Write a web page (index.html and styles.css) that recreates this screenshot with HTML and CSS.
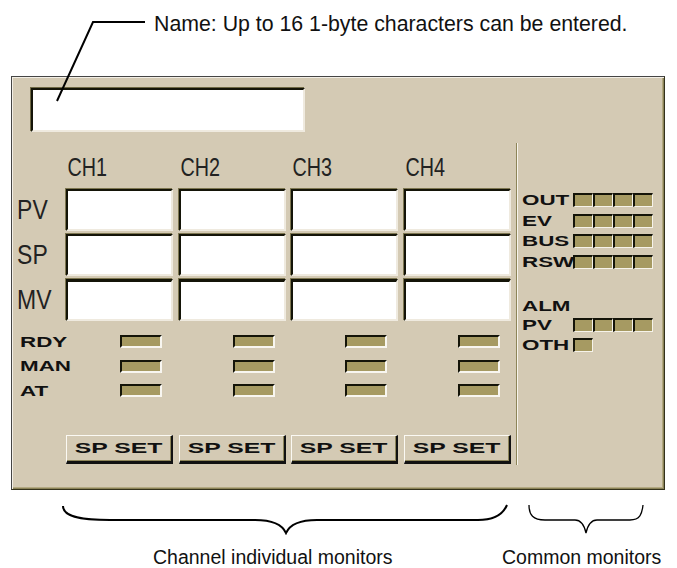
FILE: index.html
```html
<!DOCTYPE html>
<html lang="en">
<head>
    <meta charset="UTF-8" />
    <title>Loop monitor - name and monitors</title>
    <link rel="stylesheet" href="styles.css">
</head>
<body>
<div class="page">
    <p class="note"><span class="note-text">Name: Up to 16 1-byte characters can be entered.</span></p>

    <!-- leader line from the note to the name box -->
    <svg class="leader" width="677" height="110" viewBox="0 0 677 110">
        <polyline points="57,101 93,22 145,22" fill="none" stroke="#000" stroke-width="2"/>
    </svg>

    <div class="panel">
        <div class="name-box"></div>

        <div class="main">
            <div class="channels">
                <div class="cols head">
                    <span></span>
                    <span class="ch">CH1</span>
                    <span class="ch">CH2</span>
                    <span class="ch">CH3</span>
                    <span class="ch">CH4</span>
                </div>

                <div class="cols values">
                    <span class="row-label">PV</span>
                    <div class="field"></div><div class="field"></div><div class="field"></div><div class="field"></div>
                    <span class="row-label">SP</span>
                    <div class="field"></div><div class="field"></div><div class="field"></div><div class="field"></div>
                    <span class="row-label">MV</span>
                    <div class="field mv"></div><div class="field mv"></div><div class="field mv"></div><div class="field mv"></div>
                </div>

                <div class="cols lamps">
                    <span class="lamp-label"><span class="px">RDY</span></span>
                    <i class="bar"></i><i class="bar"></i><i class="bar"></i><i class="bar"></i>
                    <span class="lamp-label"><span class="px">MAN</span></span>
                    <i class="bar"></i><i class="bar"></i><i class="bar"></i><i class="bar"></i>
                    <span class="lamp-label"><span class="px">AT</span></span>
                    <i class="bar"></i><i class="bar"></i><i class="bar"></i><i class="bar"></i>
                </div>

                <div class="cols buttons">
                    <span></span>
                    <button class="sp-btn"><span class="px">SP SET</span></button>
                    <button class="sp-btn"><span class="px">SP SET</span></button>
                    <button class="sp-btn"><span class="px">SP SET</span></button>
                    <button class="sp-btn"><span class="px">SP SET</span></button>
                </div>
            </div>

            <div class="sep"></div>

            <div class="common">
                <div class="group">
                    <div class="crow"><span class="clabel"><span class="px">OUT</span></span><i class="sq"></i><i class="sq"></i><i class="sq"></i><i class="sq"></i></div>
                    <div class="crow"><span class="clabel"><span class="px">EV</span></span><i class="sq"></i><i class="sq"></i><i class="sq"></i><i class="sq"></i></div>
                    <div class="crow"><span class="clabel"><span class="px">BUS</span></span><i class="sq"></i><i class="sq"></i><i class="sq"></i><i class="sq"></i></div>
                    <div class="crow"><span class="clabel"><span class="px">RSW</span></span><i class="sq"></i><i class="sq"></i><i class="sq"></i><i class="sq"></i></div>
                </div>
                <div class="crow alm"><span class="clabel"><span class="px">ALM</span></span></div>
                <div class="crow alm-pv"><span class="clabel"><span class="px">PV</span></span><i class="sq"></i><i class="sq"></i><i class="sq"></i><i class="sq"></i></div>
                <div class="crow alm-oth"><span class="clabel"><span class="px">OTH</span></span><i class="sq"></i></div>
            </div>
        </div>
    </div>

    <svg class="braces" width="677" height="45" viewBox="0 490 677 45">
        <path d="M63,506 C63,516 78,520 110,520 L255,520 C272,520 282,524 286,533 C290,524 300,520 317,520 L478,520 C496,520 504,512 507,505"
              fill="none" stroke="#000" stroke-width="2"/>
        <path d="M529,505 C529,515 533,520 545,520 L575,520 C580,520 584,524 586,533 C588,524 592,520 597,520 L630,520 C640,520 642,514 643,505"
              fill="none" stroke="#000" stroke-width="1.3"/>
    </svg>

    <div class="captions">
        <span class="cap-ch">Channel individual monitors</span>
        <span class="cap-common">Common monitors</span>
    </div>
</div>
</body>
</html>
```

FILE: styles.css
```css
body {
    margin: 0;
    font-family: "Liberation Sans", Arial, sans-serif;
    background-color: #fff;
    color: #111;
}
.page {
    position: relative;
    width: 677px;
    height: 568px;
    overflow: hidden;
}
.note {
    margin: 0;
    padding: 12px 0 0 154px;
    font-size: 21.3px;
    line-height: 24px;
    white-space: nowrap;
}
.leader {
    position: absolute;
    left: 0;
    top: 0;
    pointer-events: none;
    z-index: 2;
}

/* main window */
.panel {
    margin: 40px 0 0 11px;
    width: 654px;
    height: 414px;
    box-sizing: border-box;
    background-color: #d4cab4;
    border: 1px solid;
    border-color: #454545 #34321c #34321c #454545;
    box-shadow: inset 1px 1px 0 #f3efe6, inset -1px -1px 0 #8a8257, inset -2px -2px 0 #b3a982;
}
.name-box {
    margin: 11px 0 0 19px;
    width: 274px;
    height: 44px;
    box-sizing: border-box;
    background: #fff;
    border: 2px solid;
    border-color: #141408 #efeadf #efeadf #141408;
    box-shadow: -1px -1px 0 #6e6844;
}
.main {
    display: flex;
    margin-top: 11px;
}
.channels {
    width: 504px;
    padding-top: 11px;
}
.sep {
    width: 2px;
    height: 322px;
    box-sizing: border-box;
    border-left: 1px solid #8d8559;
    border-right: 1px solid #f7f4ec;
}

.cols {
    display: grid;
    grid-template-columns: 48.5px repeat(4, 107px);
    column-gap: 5.5px;
}
.head {
    height: 26px;
    align-items: center;
}
.ch {
    font-size: 26px;
    line-height: 26px;
    color: #222;
    padding-left: 2px;
    transform: scaleX(0.76);
    transform-origin: left center;
}
.values {
    margin-top: 9px;
    grid-auto-rows: 42px;
    row-gap: 3px;
}
.row-label {
    align-self: center;
    padding-left: 6px;
    font-size: 27px;
    line-height: 27px;
    color: #222;
    transform: scaleX(0.85);
    transform-origin: left center;
}
.field {
    background: #fff;
    border: 2px solid;
    border-color: #141408 #efeadf #efeadf #141408;
    box-shadow: -1px -1px 0 #7d7650;
}
.field.mv {
    border-top-width: 3px;
}

/* status lamps */
.px {
    display: inline-block;
    white-space: nowrap;
    font-weight: bold;
    font-size: 14px;
    line-height: 14px;
    transform: scaleX(1.6);
    transform-origin: left center;
}
.lamps {
    margin-top: 14px;
    grid-auto-rows: 13px;
    row-gap: 11.5px;
}
.lamp-label {
    align-self: center;
    padding-left: 8px;
    line-height: 14px;
}
.bar {
    justify-self: end;
    margin-right: 11px;
    width: 42px;
    height: 13px;
    box-sizing: border-box;
    background: #a69a62;
    border-style: solid;
    border-width: 2px;
    border-color: #141408 #f8f6f0 #f8f6f0 #141408;
}

.buttons {
    margin-top: 38px;
    grid-auto-rows: 29px;
}
.sp-btn {
    padding: 0;
    margin: 0;
    font-family: inherit;
    color: #111;
    background: #d4cab4;
    border-style: solid;
    border-width: 1px 2px 3px 1px;
    border-color: #fbf9f3 #111 #111 #fbf9f3;
    box-shadow: inset -1px -1px 0 #8d8559;
    cursor: pointer;
}
.sp-btn .px {
    font-size: 15px;
    transform: scaleX(1.65);
    transform-origin: center;
}

/* common monitors */
.common {
    padding: 50px 0 0 4px;
}
.group {
    display: flex;
    flex-direction: column;
    gap: 6.5px;
}
.crow {
    display: flex;
    align-items: center;
    height: 14px;
}
.clabel {
    width: 51px;
    line-height: 14px;
}
.sq {
    width: 20px;
    height: 14px;
    box-sizing: border-box;
    background: #a69a62;
    border-style: solid;
    border-width: 2px 1px 1px 2px;
    border-color: #141408 #f6f3ea #f6f3ea #141408;
}
.alm {
    margin-top: 30px;
}
.alm-pv {
    margin-top: 5px;
}
.alm-oth {
    margin-top: 6px;
}

/* braces and captions */
.braces {
    display: block;
}
.captions {
    margin-top: 10px;
    position: relative;
    height: 24px;
    font-size: 19.5px;
    line-height: 24px;
    white-space: nowrap;
}
.cap-ch {
    position: absolute;
    left: 153px;
}
.cap-common {
    position: absolute;
    left: 502px;
}
```
